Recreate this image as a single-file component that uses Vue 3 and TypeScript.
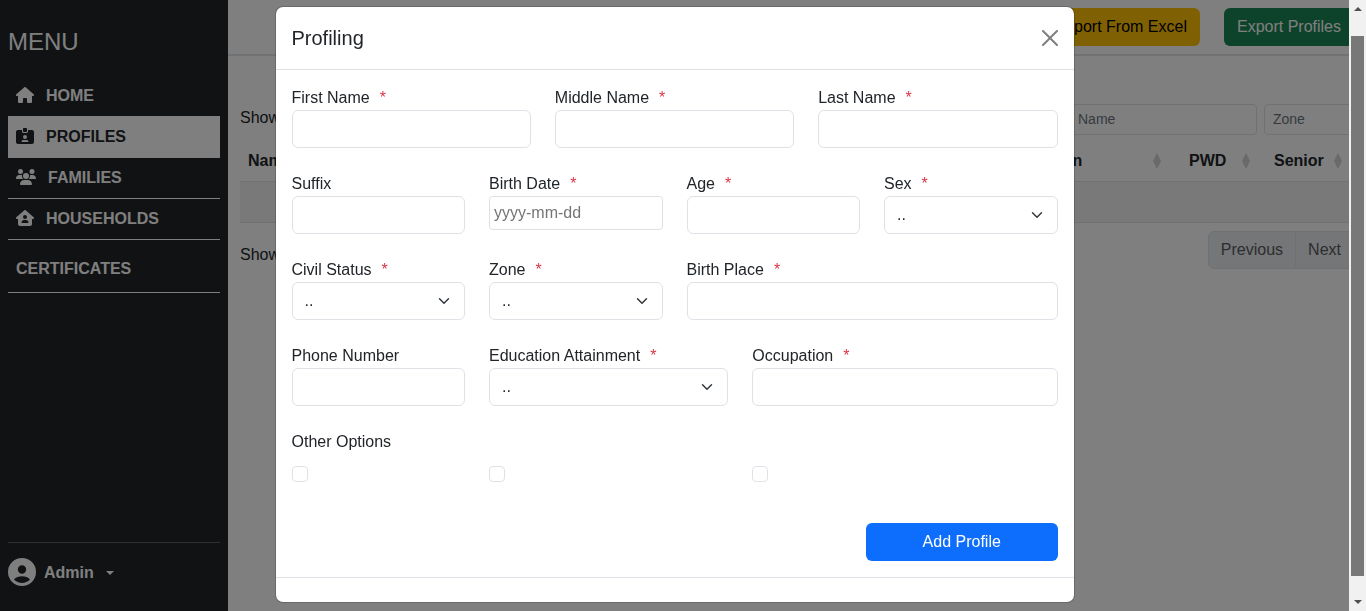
<script setup lang="ts">
import { ref } from 'vue'

interface NavItem {
  label: string
  width: number
  path: string
  active?: boolean
}

interface Field {
  id: string
  label: string
  span: number
  kind: 'text' | 'date' | 'select'
  required?: boolean
}

const navItems: NavItem[] = [
  {
    label: 'HOME',
    width: 576,
    path: 'M575.8 255.5c0 18-15 32.1-32 32.1h-32l.7 160.2c0 2.7-.2 5.4-.5 8.1V472c0 22.1-17.9 40-40 40H456c-1.1 0-2.2 0-3.3-.1c-1.4 .1-2.8 .1-4.2 .1H416 392c-22.1 0-40-17.9-40-40V448 384c0-17.7-14.3-32-32-32H256c-17.7 0-32 14.3-32 32v64 24c0 22.1-17.9 40-40 40H160 128.1c-1.5 0-3-.1-4.5-.2c-1.2 .1-2.4 .2-3.6 .2H104c-22.1 0-40-17.9-40-40V360c0-.9 0-1.9 .1-2.8V287.6H32c-18 0-32-14-32-32.1c0-9 3-17 10-24L266.4 8c7-7 15-8 22-8s15 2 21 7L564.8 231.5c8 7 12 15 11 24z',
  },
  {
    label: 'PROFILES',
    width: 576,
    active: true,
    path: 'M256 0h64c17.7 0 32 14.3 32 32V96c0 17.7-14.3 32-32 32H256c-17.7 0-32-14.3-32-32V32c0-17.7 14.3-32 32-32zM64 64H192v48c0 26.5 21.5 48 48 48h96c26.5 0 48-21.5 48-48V64H512c35.3 0 64 28.7 64 64V448c0 35.3-28.7 64-64 64H64c-35.3 0-64-28.7-64-64V128C0 92.7 28.7 64 64 64zM176 437.3c0 5.9 4.8 10.7 10.7 10.7H389.3c5.9 0 10.7-4.8 10.7-10.7c0-29.5-23.9-53.3-53.3-53.3H229.3c-29.5 0-53.3 23.9-53.3 53.3zM288 352a64 64 0 1 0 0-128 64 64 0 1 0 0 128z',
  },
  {
    label: 'FAMILIES',
    width: 640,
    path: 'M144 0a80 80 0 1 1 0 160A80 80 0 1 1 144 0zM512 0a80 80 0 1 1 0 160A80 80 0 1 1 512 0zM0 298.7C0 239.8 47.8 192 106.7 192h42.7c15.9 0 31 3.5 44.6 9.7c-1.3 7.2-1.9 14.7-1.9 22.3c0 38.2 16.8 72.5 43.3 96c-.2 0-.4 0-.7 0H21.3C9.6 320 0 310.4 0 298.7zM405.3 320c-.2 0-.4 0-.7 0c26.6-23.5 43.3-57.8 43.3-96c0-7.6-.7-15-1.9-22.3c13.6-6.3 28.7-9.7 44.6-9.7h42.7C592.2 192 640 239.8 640 298.7c0 11.8-9.6 21.3-21.3 21.3H405.3zM224 224a96 96 0 1 1 192 0 96 96 0 1 1 -192 0zM128 485.3C128 411.7 187.7 352 261.3 352H378.7C452.3 352 512 411.7 512 485.3c0 14.7-11.9 26.7-26.7 26.7H154.7c-14.7 0-26.7-11.9-26.7-26.7z',
  },
  {
    label: 'HOUSEHOLDS',
    width: 576,
    path: 'M543.8 287.6c17 0 32-14 32-32.1c1-9-3-17-11-24L309.5 7c-6-5-14-7-21-7s-15 1-22 8L10 231.5c-7 7-10 15-10 24c0 18 14 32.1 32 32.1h32V448c0 35.3 28.7 64 64 64H448.5c35.5 0 64.2-28.8 64-64.3l-.7-160.2h32zM352 224a64 64 0 1 0 -128 0 64 64 0 1 0 128 0zm-96 96c-44.2 0-80 35.8-80 80c0 8.8 7.2 16 16 16H384c8.8 0 16-7.2 16-16c0-44.2-35.8-80-80-80H256z',
  },
]

const fields: Field[] = [
  { id: 'first-name', label: 'First Name', span: 4, kind: 'text', required: true },
  { id: 'middle-name', label: 'Middle Name', span: 4, kind: 'text', required: true },
  { id: 'last-name', label: 'Last Name', span: 4, kind: 'text', required: true },
  { id: 'suffix', label: 'Suffix', span: 3, kind: 'text' },
  { id: 'birth-date', label: 'Birth Date', span: 3, kind: 'date', required: true },
  { id: 'age', label: 'Age', span: 3, kind: 'text', required: true },
  { id: 'sex', label: 'Sex', span: 3, kind: 'select', required: true },
  { id: 'civil-status', label: 'Civil Status', span: 3, kind: 'select', required: true },
  { id: 'zone', label: 'Zone', span: 3, kind: 'select', required: true },
  { id: 'birth-place', label: 'Birth Place', span: 6, kind: 'text', required: true },
  { id: 'phone', label: 'Phone Number', span: 3, kind: 'text' },
  { id: 'education', label: 'Education Attainment', span: 4, kind: 'select', required: true },
  { id: 'occupation', label: 'Occupation', span: 5, kind: 'text', required: true },
]

const optionSpans = [3, 4, 5]
const columns = ['Name', 'Education', 'PWD', 'Senior']
const values = ref<Record<string, string>>(Object.fromEntries(fields.map((f) => [f.id, ''])))
const checks = ref<boolean[]>([false, false, false])
</script>

<template>
  <div class="page">
    <aside class="sidebar">
      <h1 class="menu-title">MENU</h1>
      <nav>
        <a v-for="item in navItems" :key="item.label" href="#" class="nav-item" :class="{ active: item.active }">
          <svg :class="item.width === 640 ? 'icon icon-wide' : 'icon'" :viewBox="`0 0 ${item.width} 512`" aria-hidden="true">
            <path :d="item.path" fill="currentColor" fill-rule="evenodd" />
          </svg>
          <span>{{ item.label }}</span>
        </a>
        <a href="#" class="nav-item certificates">CERTIFICATES</a>
      </nav>
      <div class="account">
        <button type="button" class="account-button">
          <svg class="avatar" viewBox="0 0 28 28" aria-hidden="true">
            <path
              fill="currentColor"
              fill-rule="evenodd"
              d="M14 0a14 14 0 1 0 0 28a14 14 0 1 0 0-28zM14 7.300a4.200 4.200 0 1 1 0 8.400a4.200 4.200 0 1 1 0-8.400zM6 21.500C7.800 19.300 10.800 18.200 14 18.200s6.200 1.100 8 3.300C19.800 23.900 17 24.900 14 24.900s-5.800-1-8-3.400z"
            />
          </svg>
          <span class="account-name">Admin <span class="caret"></span></span>
        </button>
      </div>
    </aside>

    <main class="main">
      <header class="toolbar">
        <button type="button" class="btn btn-warning">Import From Excel</button>
        <button type="button" class="btn btn-success">Export Profiles</button>
      </header>
      <section class="content">
        <div class="filters">
          <span class="show">Show</span>
          <input class="filter filter-name" type="text" placeholder="Name" aria-label="Name" />
          <input class="filter filter-zone" type="text" placeholder="Zone" aria-label="Zone" />
        </div>
        <table class="table">
          <thead>
            <tr>
              <th v-for="column in columns" :key="column" :class="`col-${column.toLowerCase()}`">
                <div class="th-inner">
                  <span>{{ column }}</span>
                  <svg class="sort" viewBox="0 0 8 16" aria-hidden="true">
                    <path d="M4 0l4 8l-4 8l-4-8z" fill="currentColor" />
                  </svg>
                </div>
              </th>
            </tr>
          </thead>
          <tbody>
            <tr>
              <td :colspan="columns.length"></td>
            </tr>
          </tbody>
        </table>
        <div class="table-footer">
          <span class="showing">Showing</span>
          <div class="pagination">
            <button type="button">Previous</button>
            <button type="button">Next</button>
          </div>
        </div>
      </section>
    </main>
  </div>

  <div class="backdrop">
    <div class="modal" role="dialog" aria-labelledby="modal-title">
      <div class="modal-header">
        <h2 id="modal-title">Profiling</h2>
        <button type="button" class="close" aria-label="Close">
          <svg viewBox="0 0 16 16" aria-hidden="true">
            <path
              d="M.293.293a1 1 0 0 1 1.414 0L8 6.586 14.293.293a1 1 0 1 1 1.414 1.414L9.414 8l6.293 6.293a1 1 0 0 1-1.414 1.414L8 9.414l-6.293 6.293a1 1 0 0 1-1.414-1.414L6.586 8 .293 1.707a1 1 0 0 1 0-1.414z"
            />
          </svg>
        </button>
      </div>
      <form class="modal-body" @submit.prevent>
        <div class="grid">
          <div v-for="field in fields" :key="field.id" :class="`span-${field.span}`">
            <label :for="field.id">{{ field.label }}<span v-if="field.required" class="required">*</span></label>
            <select v-if="field.kind === 'select'" :id="field.id" v-model="values[field.id]" class="control select">
              <option value="">..</option>
            </select>
            <input
              v-else-if="field.kind === 'date'"
              :id="field.id"
              v-model="values[field.id]"
              type="text"
              class="control date"
              placeholder="yyyy-mm-dd"
            />
            <input v-else :id="field.id" v-model="values[field.id]" type="text" class="control" />
          </div>
        </div>
        <fieldset class="options">
          <legend>Other Options</legend>
          <div class="grid">
            <div v-for="(span, index) in optionSpans" :key="span" class="check-cell" :class="`span-${span}`">
              <input v-model="checks[index]" type="checkbox" class="check" :aria-label="`Option ${index + 1}`" />
            </div>
          </div>
        </fieldset>
        <div class="actions">
          <button type="submit" class="btn btn-primary">Add Profile</button>
        </div>
      </form>
      <div class="modal-footer"></div>
    </div>
  </div>

  <div class="scrollbar" aria-hidden="true">
    <svg class="arrow" viewBox="0 0 8 4"><path d="M4 0l4 4H0z" /></svg>
    <div class="thumb"></div>
    <svg class="arrow" viewBox="0 0 8 4"><path d="M0 0h8L4 4z" /></svg>
  </div>
</template>

<style>
body {
  margin: 0;
  overflow: hidden;
  background: #fff;
  color: #212529;
  font: 16px/24px "Liberation Sans", Arial, sans-serif;
}
</style>

<style scoped>
* {
  box-sizing: border-box;
}
button,
input,
select {
  font: inherit;
  color: inherit;
  margin: 0;
}
.page {
  display: flex;
  height: 100vh;
}
.sidebar {
  display: flex;
  flex-direction: column;
  width: 228px;
  flex-shrink: 0;
  padding: 0 8px;
  background: #212529;
  color: #fff;
}
.menu-title {
  margin: 0;
  padding: 24px 0 16px;
  font-size: 24px;
  line-height: 36px;
  font-weight: 400;
}
.nav-item {
  display: flex;
  align-items: center;
  gap: 12px;
  padding: 8px;
  border-bottom: 1px solid #fff;
  color: #fff;
  font-weight: 700;
  text-decoration: none;
}
.nav-item.active {
  background: #fff;
  color: #212529;
}
.nav-item.certificates {
  padding: 17px 8px 11px;
}
.icon {
  width: 18px;
  height: 16px;
  margin-bottom: 2px;
}
.icon-wide {
  width: 20px;
}
.account {
  margin-top: auto;
  padding: 15px 0 25px;
  border-top: 1px solid #5d6063;
}
.account-button {
  display: flex;
  align-items: center;
  gap: 8px;
  padding: 0;
  border: 0;
  background: none;
  font-weight: 700;
}
.avatar {
  width: 28px;
  height: 28px;
}
.account-name {
  display: flex;
  align-items: center;
  gap: 12px;
  padding-top: 2px;
}
.caret {
  border-top: 4px solid;
  border-left: 4px solid transparent;
  border-right: 4px solid transparent;
}
.main {
  flex: 1;
  min-width: 0;
}
.toolbar {
  display: flex;
  justify-content: flex-end;
  gap: 24px;
  padding: 8px 12px;
  border-bottom: 2px solid #dee2e6;
}
.btn {
  padding: 6px 12px;
  border: 1px solid transparent;
  border-radius: 6px;
}
.btn-warning {
  background: #ffc107;
  color: #000;
}
.btn-success {
  background: #198754;
  color: #fff;
}
.btn-primary {
  width: 25%;
  background: #0d6efd;
  color: #fff;
}
.content {
  padding: 48px 12px;
}
.filters {
  display: flex;
  align-items: flex-start;
  gap: 7px;
}
.show {
  margin-right: auto;
  padding-top: 2px;
}
.filter {
  padding: 4px 8px;
  border: 1px solid #dee2e6;
  border-radius: 4px;
  font-size: 14px;
  line-height: 21px;
}
.filter::placeholder {
  color: #6c757d;
}
.filter-name {
  width: 188px;
}
.filter-zone {
  width: 90px;
}
.table {
  width: 100%;
  margin-top: 6px;
  table-layout: fixed;
  border-collapse: collapse;
}
.table th {
  padding: 8px;
  border-bottom: 1px solid #dee2e6;
  text-align: left;
}
.table td {
  height: 41px;
  padding: 8px;
  border-bottom: 1px solid #dee2e6;
  background: #f2f2f2;
}
.th-inner {
  display: flex;
  align-items: center;
  justify-content: space-between;
}
.sort {
  width: 8px;
  height: 16px;
  margin-right: 8px;
  color: #d3d3d3;
}
.col-education {
  width: 184px;
}
.col-education .sort {
  margin-right: 12px;
}
.col-pwd {
  width: 85px;
}
.col-senior {
  width: 88px;
}
.col-senior .sort {
  margin-right: 4px;
}
.table-footer {
  display: flex;
  align-items: flex-start;
  justify-content: space-between;
  margin-top: 8px;
}
.showing {
  padding-top: 12px;
}
.pagination {
  display: flex;
}
.pagination button {
  padding: 6px 12px;
  border: 1px solid #dee2e6;
  background: #e9ecef;
  color: #595c5f;
}
.pagination button:first-child {
  border-radius: 6px 0 0 6px;
}
.pagination button:last-child {
  margin-left: -1px;
  border-radius: 0 6px 6px 0;
}
.backdrop {
  position: fixed;
  inset: 0;
  padding: 6px 17px 8px 0;
  background: rgba(0, 0, 0, 0.5);
}
.modal {
  max-width: 800px;
  margin: 0 auto;
  border: 1px solid rgba(0, 0, 0, 0.175);
  border-radius: 8px;
  background: #fff;
  background-clip: padding-box;
}
.modal-header {
  display: flex;
  align-items: center;
  justify-content: space-between;
  padding: 16px;
  border-bottom: 1px solid #dee2e6;
}
.modal-header h2 {
  margin: 0;
  font-size: 20px;
  line-height: 30px;
  font-weight: 400;
}
.close {
  display: flex;
  padding: 0;
  border: 0;
  background: none;
  opacity: 0.5;
}
.close svg {
  width: 16px;
  height: 16px;
}
.modal-body {
  padding: 16px;
}
.grid {
  display: grid;
  grid-template-columns: repeat(12, 1fr);
  gap: 24px;
}
.span-3 {
  grid-column: span 3;
}
.span-4 {
  grid-column: span 4;
}
.span-5 {
  grid-column: span 5;
}
.span-6 {
  grid-column: span 6;
}
label {
  display: block;
}
.required {
  margin-left: 10px;
  color: #dc3545;
}
.control {
  display: block;
  width: 100%;
  height: 38px;
  padding: 6px 12px;
  border: 1px solid #dee2e6;
  border-radius: 6px;
  background-color: #fff;
}
.date {
  height: 34px;
  padding: 4px;
  border-radius: 4px;
}
.date::placeholder {
  color: #757575;
}
.select {
  padding-right: 36px;
  appearance: none;
  background-image: url("data:image/svg+xml,%3csvg xmlns='http://www.w3.org/2000/svg' viewBox='0 0 16 16'%3e%3cpath fill='none' stroke='%23343a40' stroke-linecap='round' stroke-linejoin='round' stroke-width='2' d='m2 5 6 6 6-6'/%3e%3c/svg%3e");
  background-repeat: no-repeat;
  background-position: right 12px center;
  background-size: 16px 12px;
}
.options {
  margin: 24px 0 0;
  padding: 0;
  border: 0;
}
.options legend {
  padding: 0 0 12px;
}
.check-cell {
  display: flex;
}
.check {
  width: 16px;
  height: 16px;
  border: 1px solid #dee2e6;
  border-radius: 4px;
  appearance: none;
  background: #fff;
}
.check:checked {
  border-color: #0d6efd;
  background: #0d6efd;
}
.actions {
  display: flex;
  justify-content: flex-end;
  margin-top: 41px;
}
.modal-footer {
  padding: 12px;
  border-top: 1px solid #dee2e6;
}
.scrollbar {
  position: fixed;
  top: 0;
  right: 0;
  bottom: 0;
  display: flex;
  flex-direction: column;
  align-items: center;
  width: 17px;
  padding: 7px 0;
  background: #f1f1f1;
}
.arrow {
  width: 8px;
  height: 4px;
  fill: #505050;
}
.thumb {
  flex: 1;
  width: 13px;
  margin: 25px 0 24px;
  background: #787878;
}
</style>
